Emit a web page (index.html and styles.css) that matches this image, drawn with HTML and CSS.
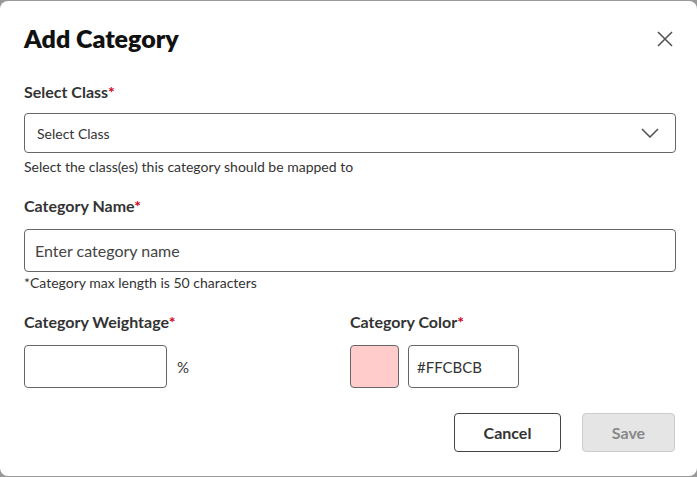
FILE: index.html
```html
<html>
  <head>
    <title>Add Category</title>
    <meta charset="utf-8" />
    <link rel="stylesheet" href="styles.css">
  </head>
  <body>
    <div class="modal">
      <div class="modal-head">
        <h1>Add Category</h1>
        <button type="button" class="close" aria-label="Close">
          <svg width="16" height="16" viewBox="0 0 16 16"><path d="M1 1L15 15M15 1L1 15" stroke="#555" stroke-width="1.6" fill="none"/></svg>
        </button>
      </div>

      <div class="field">
        <label>Select Class<span class="req">*</span></label>
        <div class="select">
          <span>Select Class</span>
          <svg width="18" height="10" viewBox="0 0 18 10"><path d="M1 1L9 9L17 1" stroke="#555" stroke-width="1.6" fill="none"/></svg>
        </div>
        <p class="hint">Select the class(es) this category should be mapped to</p>
      </div>

      <div class="field">
        <label>Category Name<span class="req">*</span></label>
        <input type="text" class="text-input" placeholder="Enter category name" />
        <p class="hint">*Category max length is 50 characters</p>
      </div>

      <div class="row">
        <div class="field">
          <label>Category Weightage<span class="req">*</span></label>
          <div class="inline">
            <input type="text" class="weight" />
            <span class="unit">%</span>
          </div>
        </div>
        <div class="field">
          <label>Category Color<span class="req">*</span></label>
          <div class="inline">
            <div class="swatch"></div>
            <input type="text" class="hex" value="#FFCBCB" />
          </div>
        </div>
      </div>

      <div class="actions">
        <button type="button" class="btn cancel">Cancel</button>
        <button type="button" class="btn save" disabled>Save</button>
      </div>
    </div>
  </body>
</html>
```

FILE: styles.css
```css
* {
  padding: 0;
  margin: 0;
  box-sizing: border-box;
}
body {
  font-family: Lato, "Noto Sans", sans-serif;
  background-color: #999;
  color: #333;
  width: 697px;
  height: 477px;
  overflow: hidden;
}
.modal {
  margin-top: 1px;
  width: 697px;
  height: 475px;
  background-color: white;
  border-radius: 8px;
  padding: 22px 21px 0 24px;
}
.modal-head {
  display: flex;
  justify-content: space-between;
  align-items: center;
  height: 30px;
}
h1 {
  font-size: 25px;
  font-weight: 800;
  color: #111;
  line-height: 30px;
}
.close {
  border: none;
  background: none;
  width: 16px;
  height: 16px;
  margin-right: 3px;
  margin-top: 1px;
  display: flex;
}
.field label {
  display: block;
  font-size: 16px;
  font-weight: 700;
  line-height: 20px;
  color: #333;
}
.req {
  color: #d0021b;
}
.modal-head + .field {
  margin-top: 29px;
}
.select {
  margin-top: 11px;
  height: 40px;
  border: 1px solid #666;
  border-radius: 4px;
  display: flex;
  align-items: center;
  justify-content: space-between;
  padding: 0 16px 0 12px;
  font-size: 14px;
}
.hint {
  font-size: 14px;
  line-height: 16px;
  margin-top: 6px;
}
.field + .field {
  margin-top: 21px;
}
.text-input {
  margin-top: 13px;
  display: block;
  width: 100%;
  height: 43px;
  border: 1px solid #666;
  border-radius: 4px;
  padding: 0 10px;
  font-family: inherit;
  font-size: 16px;
}
.text-input::placeholder {
  color: #444;
}
.text-input + .hint {
  margin-top: 3px;
}
.row {
  display: grid;
  grid-template-columns: 1fr 1fr;
  margin-top: 21px;
}
.row .field + .field {
  margin-top: 0;
}
.inline {
  margin-top: 13px;
  display: flex;
  align-items: center;
  gap: 9px;
}
.weight, .hex, .swatch {
  height: 43px;
  border: 1px solid #666;
  border-radius: 4px;
  font-family: inherit;
  font-size: 15px;
  color: #333;
}
.weight {
  width: 143px;
}
.unit {
  font-size: 15px;
  margin-left: 1px;
}
.swatch {
  width: 49px;
  background-color: #FFCBCB;
}
.hex {
  width: 111px;
  padding: 0 8px;
}
.actions {
  margin-top: 25px;
  display: flex;
  justify-content: flex-end;
  gap: 21px;
  padding-right: 1px;
}
.btn {
  height: 39px;
  border-radius: 4px;
  font-family: inherit;
  font-size: 16px;
  font-weight: 700;
}
.cancel {
  width: 107px;
  background: white;
  border: 1px solid #444;
  color: #333;
}
.save {
  width: 93px;
  background-color: #e5e5e5;
  border: 1px solid #ccc;
  color: #888;
}
```
